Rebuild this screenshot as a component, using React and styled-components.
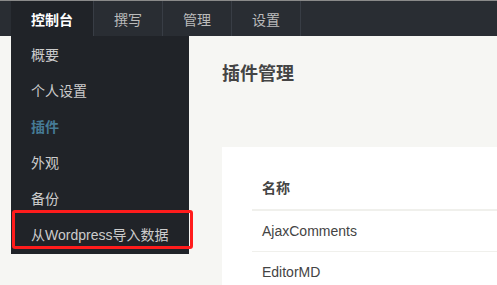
import styled, { createGlobalStyle } from 'styled-components';

const GlobalStyle = createGlobalStyle`
  html, body {
    margin: 0;
    padding: 0;
    background: #f6f6f3;
    font-family: "Liberation Sans", "Noto Sans CJK SC", sans-serif;
    font-size: 14px;
    color: #444;
  }
`;

const tabs = ['控制台', '撰写', '管理', '设置'];
const menu = ['概要', '个人设置', '插件', '外观', '备份', '从Wordpress导入数据'];
const plugins = ['AjaxComments', 'EditorMD'];

function App() {
  return (
    <PageUI>
      <GlobalStyle />
      <NavUI>
        {tabs.map((tab, i) => (
          <TabUI key={tab} $active={i === 0}>
            {tab}
            {i === 0 && (
              <DropdownUI>
                {menu.map(item => (
                  <MenuItemUI key={item} $current={item === '插件'}>
                    {item}
                  </MenuItemUI>
                ))}
                <HighlightUI />
              </DropdownUI>
            )}
          </TabUI>
        ))}
      </NavUI>

      <MainUI>
        <TitleUI>插件管理</TitleUI>
        <CardUI>
          <TableUI>
            <thead>
              <tr>
                <HeadCellUI>名称</HeadCellUI>
              </tr>
            </thead>
            <tbody>
              {plugins.map(name => (
                <tr key={name}>
                  <CellUI>{name}</CellUI>
                </tr>
              ))}
            </tbody>
          </TableUI>
        </CardUI>
      </MainUI>
    </PageUI>
  );
}

const PageUI = styled.div`
  height: 100vh;
  overflow: hidden;
`;

const NavUI = styled.div`
  display: flex;
  height: 35px;
  padding-left: 11px;
  background: #292d33;
  border-top: 1px solid #8a8a8a;
`;

const TabUI = styled.div`
  position: relative;
  display: flex;
  align-items: center;
  padding: 0 20px;
  border-left: ${props => (props.$active ? 'none' : '1px solid #383d45')};
  background: ${props => (props.$active ? '#202328' : 'transparent')};
  color: ${props => (props.$active ? '#fff' : '#bbb')};
  font-weight: ${props => (props.$active ? 'bold' : 'normal')};
  &:last-child {
    border-right: 1px solid #383d45;
  }
`;

const DropdownUI = styled.div`
  position: absolute;
  top: 35px;
  left: 0;
  z-index: 2;
  width: 178px;
  padding: 1px 0;
  background: #202328;
  display: flex;
  flex-direction: column;
  font-weight: normal;
`;

const MenuItemUI = styled.div`
  height: 36px;
  line-height: 36px;
  padding-left: 20px;
  color: ${props => (props.$current ? '#467b96' : '#ccc')};
  font-weight: ${props => (props.$current ? 'bold' : 'normal')};
  white-space: nowrap;
`;

const HighlightUI = styled.div`
  position: absolute;
  left: 1px;
  top: 174px;
  width: 175px;
  height: 33px;
  border: 3px solid #ff1c1c;
  border-radius: 3px;
`;

const MainUI = styled.div`
  padding-left: 222px;
`;

const TitleUI = styled.h2`
  margin: 0;
  padding-top: 28px;
  height: 82px;
  box-sizing: border-box;
  font-size: 18px;
  line-height: 20px;
  font-weight: bold;
  color: #444;
`;

const CardUI = styled.div`
  margin-top: 29px;
  background: #fff;
  padding: 18px 0 0 30px;
  min-height: 150px;
`;

const TableUI = styled.table`
  width: 100%;
  border-collapse: collapse;
`;

const HeadCellUI = styled.th`
  text-align: left;
  height: 44px;
  padding: 0 10px;
  border-bottom: 2px solid #f0f0ec;
  font-weight: bold;
  color: #444;
`;

const CellUI = styled.td`
  height: 40px;
  padding: 0 10px;
  border-bottom: 1px solid #f0f0ec;
  color: #444;
`;

export default App;
